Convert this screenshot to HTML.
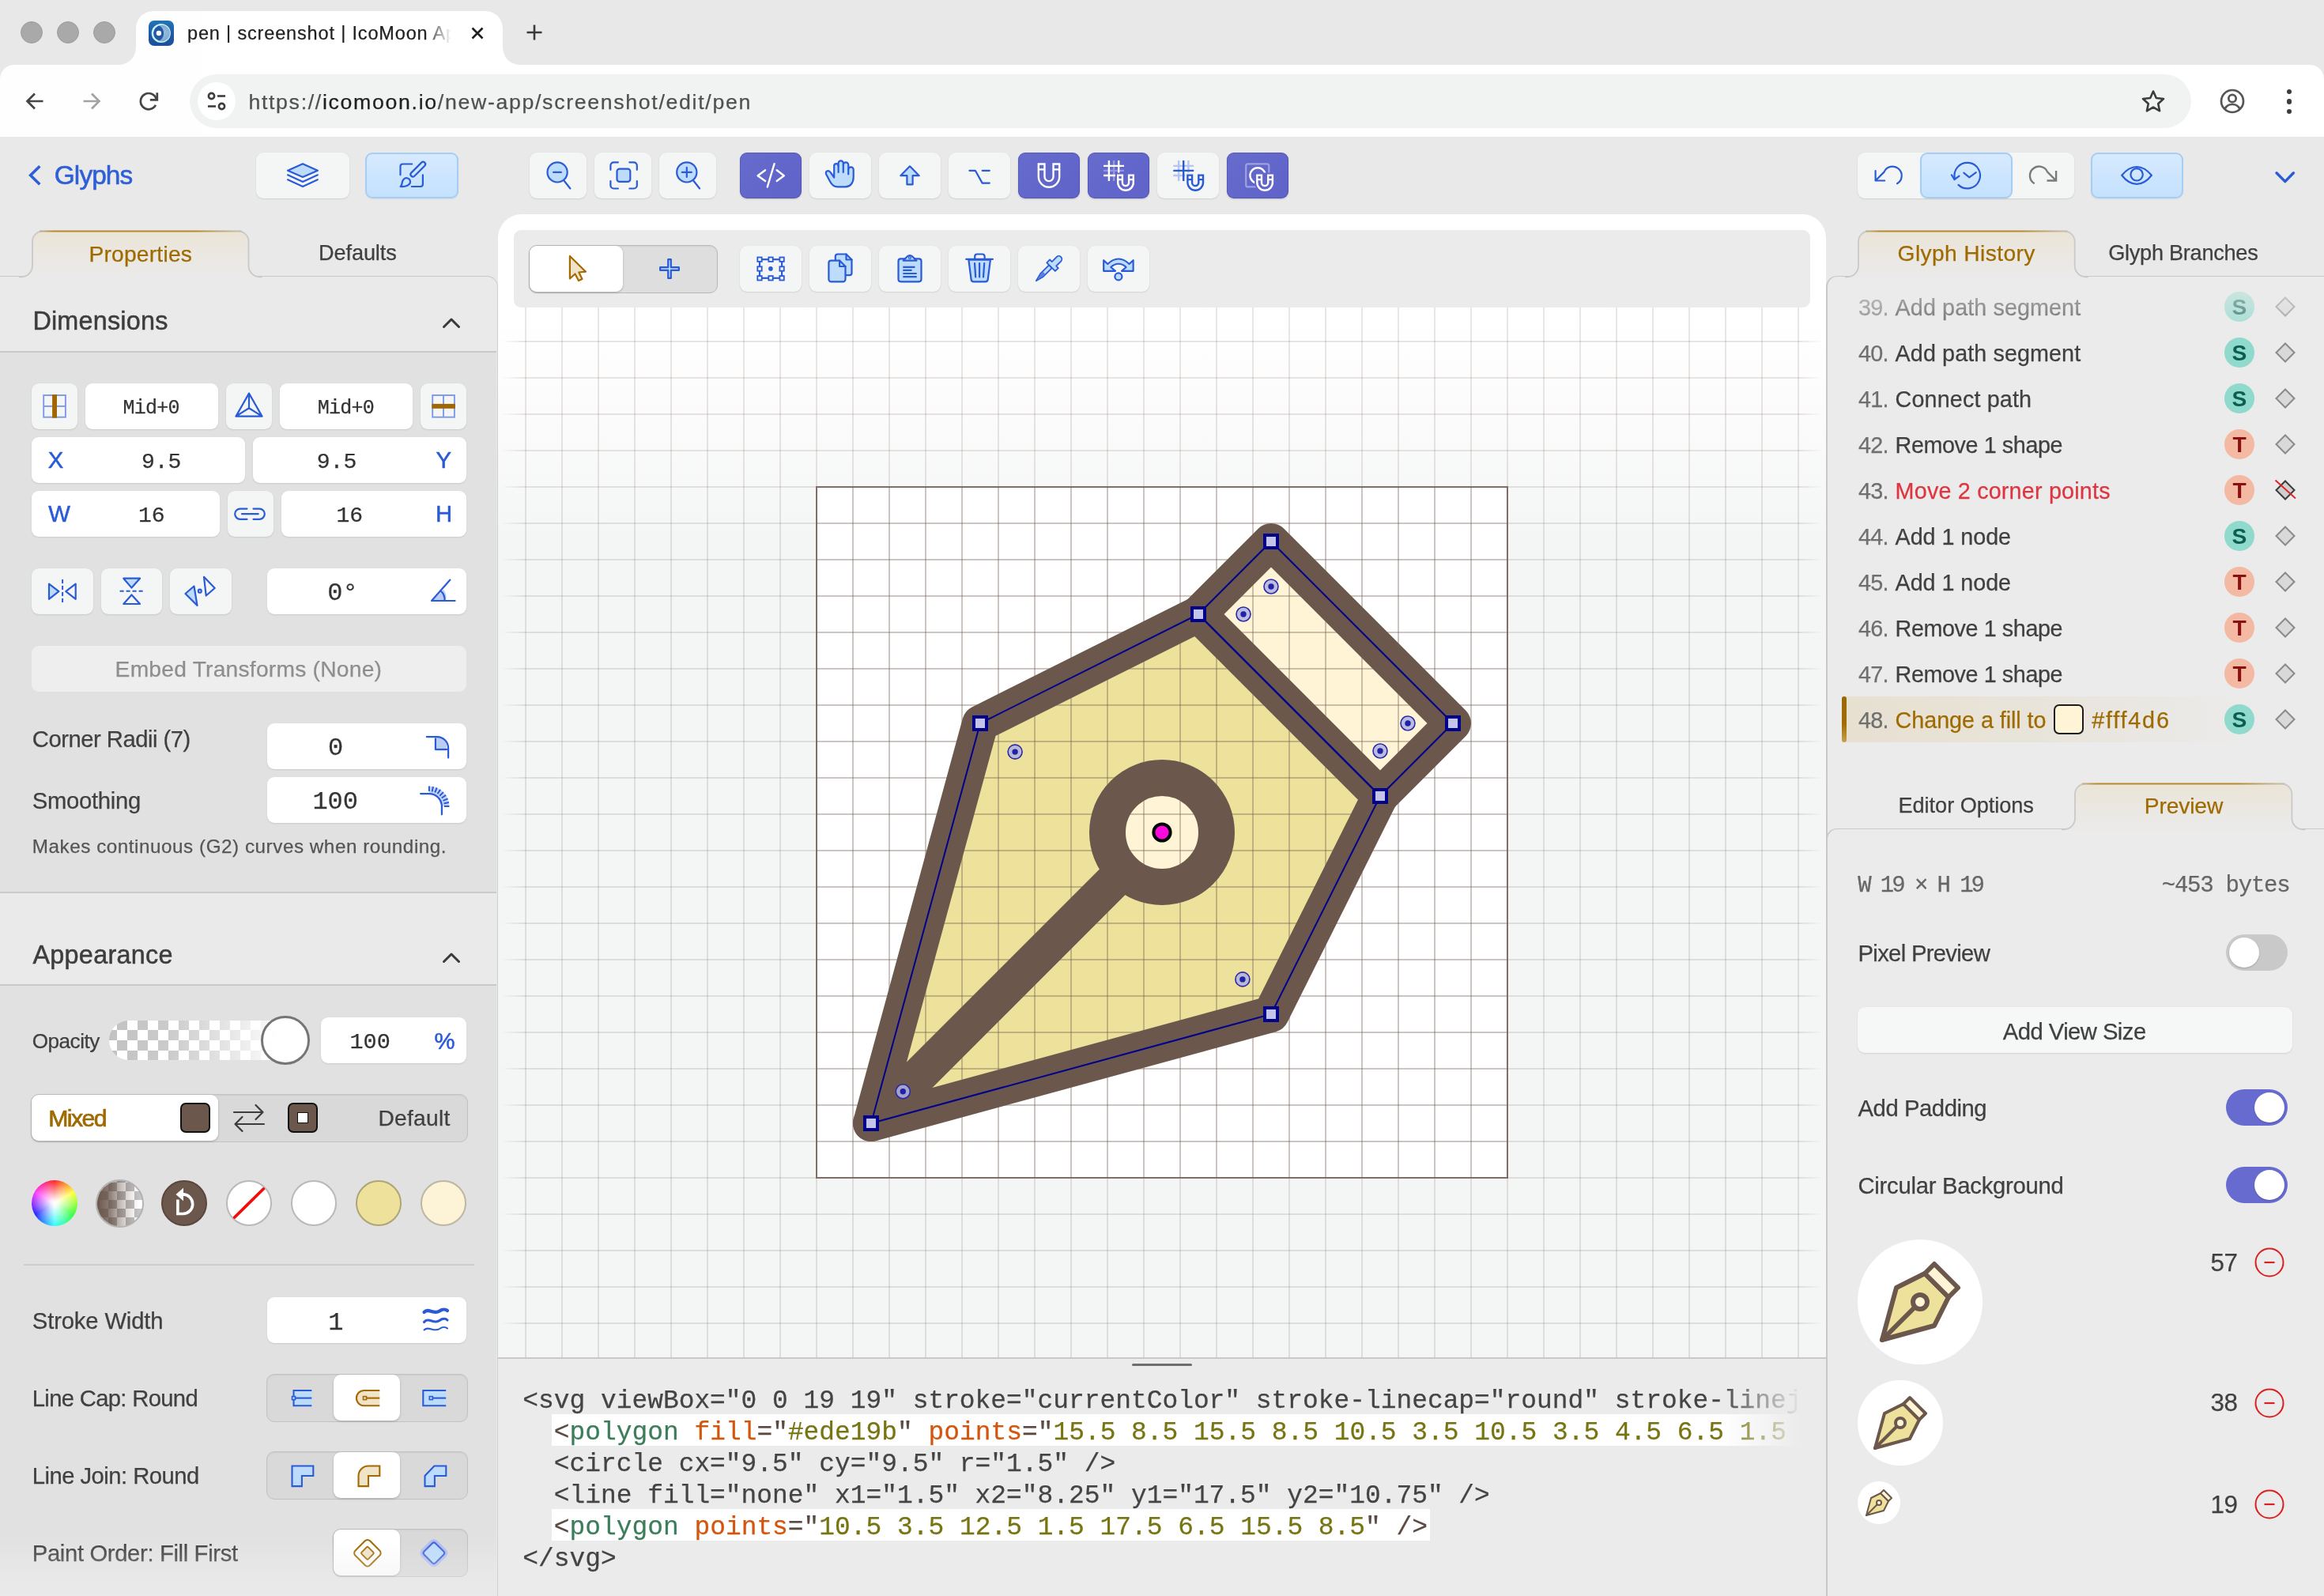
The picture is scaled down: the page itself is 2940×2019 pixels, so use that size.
<!DOCTYPE html>
<html><head><meta charset="utf-8"><title>pen | screenshot | IcoMoon App</title>
<style>
*{box-sizing:border-box;margin:0;padding:0}
html,body{width:2940px;height:2019px;overflow:hidden;background:#e9e9e9;font-family:"Liberation Sans",sans-serif;}
body{position:relative;will-change:transform;opacity:.9999}
div,span.t,svg{position:absolute}
span.t{white-space:pre;display:block;-webkit-text-stroke:0.25px currentColor}
svg{overflow:visible}
.btn{background:#f4f5f5;border-radius:9px;box-shadow:0 1px 2px rgba(0,0,0,.10),0 0 1px rgba(0,0,0,.06)}
.ind{background:linear-gradient(135deg,#666bcd,#5f63c8);border-radius:9px;box-shadow:0 1px 2px rgba(0,0,0,.18), inset 0 0 0 1px rgba(60,60,150,.35)}
.blu{background:linear-gradient(#d6eaff,#c4e1fd);border-radius:9px;border:2px solid #a6cdf3;box-shadow:0 1px 2px rgba(0,0,0,.06)}
.inp{background:#fff;border-radius:9px;box-shadow:0 1px 2px rgba(0,0,0,.10)}
.seg{background:#d9d9d9;border-radius:10px;border:1.5px solid #c2c2c2;box-shadow:inset 0 1px 2px rgba(0,0,0,.06)}
.segw{background:#fff;border-radius:9px;box-shadow:0 1px 3px rgba(0,0,0,.22)}
.ic{fill:none;stroke:#2a5bd7;stroke-width:2.2;stroke-linecap:round;stroke-linejoin:round}
.icf{fill:#bddcfc;stroke:#2a5bd7;stroke-width:2.2;stroke-linecap:round;stroke-linejoin:round}
.icw{fill:none;stroke:#fff;stroke-width:2.4;stroke-linecap:round;stroke-linejoin:round}
.ica{fill:#f1e3c8;stroke:#a26a00;stroke-width:2.2;stroke-linecap:round;stroke-linejoin:round}
</style></head><body>

<div style="left:0px;top:0px;width:2940px;height:173px;background:#e8e8e8"></div>
<div style="left:0px;top:82px;width:2940px;height:91px;background:#fff;border-radius:18px 18px 0 0"></div>
<svg style="left:148px;top:14px;" width="512" height="70" viewBox="0 0 512 70"><path d="M0 68 C14 68 24 60 24 44 L24 24 C24 8 34 0 48 0 L464 0 C478 0 488 8 488 24 L488 44 C488 60 498 68 512 68 L512 70 L0 70 Z" fill="#fff"/></svg>
<div style="left:26px;top:27px;width:28px;height:28px;border-radius:50%;background:#a9a9a9;border:1px solid #9c9c9c"></div>
<div style="left:72px;top:27px;width:28px;height:28px;border-radius:50%;background:#a9a9a9;border:1px solid #9c9c9c"></div>
<div style="left:118px;top:27px;width:28px;height:28px;border-radius:50%;background:#a9a9a9;border:1px solid #9c9c9c"></div>
<svg style="left:188px;top:26px;" width="32" height="32" viewBox="0 0 32 32"><defs><linearGradient id="fv" x1="0" y1="0" x2="0" y2="1"><stop offset="0" stop-color="#2374b5"/><stop offset=".6" stop-color="#1f56a2"/><stop offset="1" stop-color="#1e4f9b"/></linearGradient>
<radialGradient id="fm" cx=".62" cy=".45" r=".6"><stop offset="0" stop-color="#94bedb"/><stop offset="1" stop-color="#7fa6cf"/></radialGradient>
<clipPath id="fc"><circle cx="15.8" cy="16" r="9.7"/></clipPath></defs>
<rect width="32" height="32" rx="7" fill="url(#fv)"/>
<circle cx="15.8" cy="16" r="12.1" fill="#c6f6fb"/>
<circle cx="16.700" cy="16" r="10.400" fill="url(#fm)"/>
<circle cx="8.2" cy="16" r="10.900" fill="#2159a6" clip-path="url(#fc)"/>
<circle cx="12.9" cy="16" r="3.200" fill="#fff"/></svg>
<span class="t" style="left:237.0px;top:30px;font-size:23.5px;line-height:24px;color:#1f1f1f;width:336px;overflow:hidden;-webkit-mask-image:linear-gradient(90deg,#000 300px,transparent 334px);mask-image:linear-gradient(90deg,#000 300px,transparent 334px);letter-spacing:0.84px;">pen | screenshot | IcoMoon App</span>
<svg style="left:596px;top:34px;" width="16" height="16" viewBox="0 0 16 16"><path d="M1.5 1.5 L14.5 14.5 M14.5 1.5 L1.5 14.5" stroke="#1f1f1f" stroke-width="2.6" fill="none"/></svg>
<svg style="left:666px;top:31px;" width="20" height="20" viewBox="0 0 20 20"><path d="M10 0.5 V19.5 M0.5 10 H19.5" stroke="#3a3a3a" stroke-width="2.6" fill="none"/></svg>
<svg style="left:32px;top:116px;" width="24" height="24" viewBox="0 0 24 24"><path d="M22.5 12 H3 M12 2.5 L2.5 12 L12 21.5" stroke="#454545" stroke-width="2.7" fill="none" stroke-linejoin="miter"/></svg>
<svg style="left:104px;top:116px;" width="24" height="24" viewBox="0 0 24 24"><path d="M1.5 12 H21 M12 2.5 L21.5 12 L12 21.5" stroke="#a3a3a3" stroke-width="2.7" fill="none"/></svg>
<svg style="left:176px;top:116px;" width="24" height="24" viewBox="0 0 24 24"><path d="M21.900 10.300 A10.100 10.100 0 1 0 20.900 16.900" stroke="#454545" stroke-width="2.700" fill="none"/><path d="M22.800 1.300 V10.300 H13.800" stroke="#454545" stroke-width="2.700" fill="none"/></svg>
<div style="left:240px;top:94px;width:2532px;height:68px;background:#f1f3f3;border-radius:34px"></div>
<div style="left:250px;top:104px;width:48px;height:48px;background:#fff;border-radius:50%"></div>
<svg style="left:262px;top:116px;" width="24" height="24" viewBox="0 0 24 24"><g stroke="#3c3c3c" stroke-width="2.6" fill="none"><circle cx="5.5" cy="5.5" r="3.6"/><path d="M13 5.5 H23"/><circle cx="18.5" cy="18.5" r="3.6"/><path d="M1 18.5 H11"/></g></svg>
<span class="t" style="left:314.4px;top:116px;font-size:26.7px;line-height:27px;color:#505050;letter-spacing:1.68px;">https://<span style="color:#1f1f1f">icomoon.io</span>/new-app/screenshot/edit/pen</span>
<svg style="left:2709px;top:113px;" width="30" height="30" viewBox="0 0 30 30"><path d="M15 2.5 L18.8 11 L28 12 L21.2 18.2 L23.1 27.3 L15 22.6 L6.9 27.3 L8.8 18.2 L2 12 L11.2 11 Z" stroke="#3c3c3c" stroke-width="2.6" fill="none" stroke-linejoin="round"/></svg>
<svg style="left:2808px;top:112px;" width="32" height="32" viewBox="0 0 32 32"><g stroke="#555" stroke-width="2.7" fill="none"><circle cx="16" cy="16" r="14"/><circle cx="16" cy="12.5" r="4.7"/><path d="M6.5 26 C8.5 21.5 12 20 16 20 C20 20 23.500 21.5 25.5 26"/></g></svg>
<div style="left:2892.5px;top:112.8px;width:6.4px;height:6.4px;border-radius:50%;background:#3c3c3c"></div>
<div style="left:2892.5px;top:125.2px;width:6.4px;height:6.4px;border-radius:50%;background:#3c3c3c"></div>
<div style="left:2892.5px;top:137.8px;width:6.4px;height:6.4px;border-radius:50%;background:#3c3c3c"></div>
<svg style="left:34px;top:207px;" width="20" height="30" viewBox="0 0 20 30"><path d="M16.300 3.300 L4.600 14.800 L16.300 26.300" stroke="#2f5fd6" stroke-width="3.600" fill="none" stroke-linecap="butt" stroke-linejoin="miter"/></svg>
<span class="t" style="left:68.8px;top:205px;font-size:33.44px;line-height:34px;color:#2f5fd6;letter-spacing:-0.92px;-webkit-text-stroke:.6px #2f5fd6;">Glyphs</span>
<div class="btn" style="left:324px;top:193px;width:118px;height:58px;"></div>
<svg style="left:324px;top:193px;" width="118" height="58" viewBox="0 0 118 58"><path class="icf" d="M59 14.2 L77.9 22.8 L59 30.9 L40 22.8 Z"/><path class="ic" d="M40 28.3 L59 36.9 L77.9 28.3 M40 34.3 L59 42.9 L77.9 34.3"/></svg>
<div class="blu" style="left:462px;top:193px;width:118px;height:58px;"></div>
<svg style="left:462px;top:193px;" width="118" height="58" viewBox="0 0 118 58"><g class="ic"><path d="M59.2 14.5 H47.5 A3 3 0 0 0 44.500 17.5 V28.3"/><path d="M72.9 28.3 V40 A3 3 0 0 1 69.9 43 H58.800"/>
<path d="M71.2 12.6 A2.9 2.9 0 0 1 75.300 16.700 L62.300 29.700 A2.9 2.9 0 0 1 58.2 25.600 Z"/>
<path d="M44.6 43 C47.5 41 45.5 37.500 48.500 34.000 C51.500 30.800 56.500 32.200 57.000 36.500 C57.500 41.300 51.000 43.500 44.600 43 Z"/></g></svg>
<div class="btn" style="left:670px;top:193px;width:72px;height:58px;"></div>
<div class="btn" style="left:752px;top:193px;width:72px;height:58px;"></div>
<div class="btn" style="left:834px;top:193px;width:72px;height:58px;"></div>
<svg style="left:670px;top:193px;" width="72" height="58" viewBox="0 0 72 58"><circle class="icf" cx="35.1" cy="24.9" r="12.6"/><path class="ic" d="M43.7 35.7 L51.4 45.5 M30.1 24.9 H39.9"/></svg>
<svg style="left:752px;top:193px;" width="72" height="58" viewBox="0 0 72 58"><rect class="icf" x="28.5" y="20.6" width="16.8" height="16.3" rx="3.2"/><path class="ic" d="M20.4 21.8 V16.300 A4 4 0 0 1 24.400 12.3 H29.9 M44.300 12.3 H49.800 A4 4 0 0 1 53.8 16.3 V21.8 M53.8 36 V41.5 A4 4 0 0 1 49.800 45.5 H44.3 M29.9 45.5 H24.400 A4 4 0 0 1 20.4 41.5 V36"/></svg>
<svg style="left:834px;top:193px;" width="72" height="58" viewBox="0 0 72 58"><circle class="icf" cx="34.8" cy="24.9" r="12.6"/><path class="ic" d="M43.400 35.7 L51.100 45.5 M28.8 24.9 H40.8 M34.8 18.9 V30.9"/></svg>
<div class="ind" style="left:936px;top:193px;width:78px;height:58px;"></div>
<div class="btn" style="left:1024px;top:193px;width:78px;height:58px;"></div>
<div class="btn" style="left:1112px;top:193px;width:78px;height:58px;"></div>
<div class="btn" style="left:1200px;top:193px;width:78px;height:58px;"></div>
<div class="ind" style="left:1288px;top:193px;width:78px;height:58px;"></div>
<div class="ind" style="left:1376px;top:193px;width:78px;height:58px;"></div>
<div class="btn" style="left:1464px;top:193px;width:78px;height:58px;"></div>
<div class="ind" style="left:1552px;top:193px;width:78px;height:58px;"></div>
<svg style="left:936px;top:193px;" width="78" height="58" viewBox="0 0 78 58"><path class="icw" d="M32.1 22.3 L22.6 29.2 L32.1 36 M43.6 14.2 L34.8 43.5 M46.7 22.3 L55.8 29.2 L46.7 36" stroke-linecap="butt"/></svg>
<svg style="left:1024px;top:193px;" width="78" height="58" viewBox="0 0 78 58"><path class="icf" stroke-width="2.300" d="M31.2 30.500 V16.800 A2.700 2.700 0 0 1 36.600 16.800 V13.400 A3.100 3.100 0 0 1 42.800 13.400 V15.500 A3.200 3.200 0 0 1 49.250 15.500 V21.600 A3.200 3.200 0 0 1 55.700 21.600 V31 C55.700 38.500 51.500 43.400 45.500 43.400 H36 C31.500 43.400 28 40.500 26 36.500 L21.200 27.500 C20 25 21.500 23.200 23.500 23.200 C25 23.200 26 24 27 25.500 L31.200 31.500 Z"/><path class="ic" stroke-width="2.300" stroke-linecap="butt" d="M36.600 16.800 V24.900 M42.800 15.500 V24.900 M49.250 21.600 V27.500"/></svg>
<svg style="left:1112px;top:193px;" width="78" height="58" viewBox="0 0 78 58"><path class="icf" d="M39 17.300 L50.700 29.200 H42.600 V40.300 H35.400 V29.200 H27.300 Z"/></svg>
<svg style="left:1200px;top:193px;" width="78" height="58" viewBox="0 0 78 58"><path class="ic" d="M26.4 22.8 H33.8 L42.7 38.6 H51.8 M42.7 22.8 H51.8" stroke-linecap="butt"/></svg>
<svg style="left:1288px;top:193px;" width="78" height="58" viewBox="0 0 78 58"><path d="M25.80 14.50 H33.46 V30.60 A5.54 5.54 0 0 0 44.54 30.60 V14.50 H52.20 V30.60 A13.20 13.20 0 0 1 25.80 30.60 Z" fill="none" stroke="#fff" stroke-width="2.4" stroke-linejoin="miter"/><path d="M25.80 21.40 H33.46 M44.54 21.40 H52.20" stroke="#fff" stroke-width="2.4" fill="none"/></svg>
<svg style="left:1376px;top:193px;" width="78" height="58" viewBox="0 0 78 58"><path d="M26.9 10 V36 M39.2 10 V36 M20.100 16.9 H46 M20.100 29 H46" stroke="#fff" stroke-width="2.4" fill="none"/><path d="M33.1 10 V36 M20.100 22.9 H46" stroke="rgba(255,255,255,.32)" stroke-width="2.4" fill="none"/><path d="M35.00 25.40 H61.00 V37.90 A13.00 13.00 0 0 1 35.00 37.90 Z" fill="#6266ca"/><path d="M38.20 28.60 H43.88 V37.90 A4.12 4.12 0 0 0 52.12 37.90 V28.60 H57.80 V37.90 A9.80 9.80 0 0 1 38.20 37.90 Z" fill="#6266ca" stroke="#fff" stroke-width="2.4" stroke-linejoin="miter"/><path d="M38.20 34.10 H43.88 M52.12 34.10 H57.80" stroke="#fff" stroke-width="2.4" fill="none"/></svg>
<svg style="left:1464px;top:193px;" width="78" height="58" viewBox="0 0 78 58"><path d="M27.100 10 V36 M39.400 10 V36 M20.300 16.9 H46.200 M20.300 29 H46.200" stroke="#b3c6f1" stroke-width="2.4" fill="none"/><path d="M33.200 10 V36 M20.300 22.9 H46.200" stroke="#2a5bd7" stroke-width="2.4" fill="none"/><path d="M35.20 25.40 H61.20 V37.90 A13.00 13.00 0 0 1 35.20 37.90 Z" fill="#f4f5f5"/><path d="M38.40 28.60 H44.08 V37.90 A4.12 4.12 0 0 0 52.32 37.90 V28.60 H58.00 V37.90 A9.80 9.80 0 0 1 38.40 37.90 Z" fill="#f4f5f5" stroke="#2a5bd7" stroke-width="2.4" stroke-linejoin="miter"/><path d="M38.40 34.10 H44.08 M52.32 34.10 H58.00" stroke="#2a5bd7" stroke-width="2.4" fill="none"/></svg>
<svg style="left:1552px;top:193px;" width="78" height="58" viewBox="0 0 78 58"><rect x="24.2" y="14.4" width="29.1" height="29" rx="2.5" fill="none" stroke="rgba(255,255,255,.38)" stroke-width="2.2"/><circle cx="39.1" cy="29" r="9.7" fill="none" stroke="#fff" stroke-width="2.4"/><path d="M35.10 25.40 H61.10 V37.90 A13.00 13.00 0 0 1 35.10 37.90 Z" fill="#6266ca"/><path d="M38.30 28.60 H43.98 V37.90 A4.12 4.12 0 0 0 52.22 37.90 V28.60 H57.90 V37.90 A9.80 9.80 0 0 1 38.30 37.90 Z" fill="#6266ca" stroke="#fff" stroke-width="2.4" stroke-linejoin="miter"/><path d="M38.30 34.10 H43.98 M52.22 34.10 H57.90" stroke="#fff" stroke-width="2.4" fill="none"/></svg>
<div class="btn" style="left:2350px;top:193px;width:274px;height:58px;"></div>
<div class="blu" style="left:2429px;top:193px;width:117px;height:58px;"></div>
<div style="left:0px;top:348.9px;width:630px;height:1671px;background:#eaeaea;border-top:1.8px solid #c9c9c9;border-right:1.8px solid #cfcfcf;border-radius:0 14px 0 0"></div>
<div style="left:0px;top:444px;width:628px;height:686px;background:#e1e1e1;border-top:2px solid #c9c9c9;border-bottom:2px solid #cbcbcb"></div>
<div style="left:0px;top:1245px;width:628px;height:774px;background:linear-gradient(#e1e1e1 0,#e1e1e1 690px,#e8e8e8 774px);border-top:2px solid #c9c9c9"></div>
<svg style="left:25.8px;top:290.5px;" width="303.5" height="62.8" viewBox="0 0 303.5 62.8"><defs><linearGradient id="lg" x1="0" y1="0" x2="0" y2="1"><stop offset="0" stop-color="#ebe4d6"/><stop offset=".5" stop-color="#ebe8e2"/><stop offset="1" stop-color="#eaeaea"/></linearGradient><linearGradient id="lt" gradientUnits="userSpaceOnUse" x1="15.0" y1="0" x2="288.5" y2="0"><stop offset="0" stop-color="#cbcbcb"/><stop offset=".1" stop-color="#b58a2c"/><stop offset=".75" stop-color="#b58a2c"/><stop offset="1" stop-color="#cbcbcb"/></linearGradient></defs><path d="M1.0 59.3 C8.7 59.3 15.0 53.0 15.0 45.3 V14.5 C15.0 7.4 20.9 1.5 28.0 1.5 H275.5 C282.6 1.5 288.5 7.4 288.5 14.5 V45.3 C288.5 53.0 294.8 59.3 302.5 59.3 V61.8 H1.0 Z" fill="url(#lg)"/><path d="M-2.0 59.3 H1.0 C8.7 59.3 15.0 53.0 15.0 45.3 V14.5 C15.0 7.4 20.9 1.5 28.0 1.5 M275.5 1.5 C282.6 1.5 288.5 7.4 288.5 14.5 V45.3 C288.5 53.0 294.8 59.3 302.5 59.3 H305.5" fill="none" stroke="#c9c9c9" stroke-width="1.8"/><path d="M24.0 1.5 H279.5" stroke="url(#lt)" stroke-width="1.8" fill="none"/></svg>
<span class="t" style="left:112.4px;top:307px;font-size:28.21px;line-height:29px;color:#9f6b00;letter-spacing:0.22px;">Properties</span>
<span class="t" style="left:403.1px;top:306px;font-size:27.17px;line-height:28px;color:#404040;letter-spacing:-0.14px;">Defaults</span>
<span class="t" style="left:41.4px;top:390px;font-size:32.39px;line-height:33px;color:#3d3d3d;letter-spacing:0.20px;-webkit-text-stroke:.5px #3d3d3d;">Dimensions</span>
<svg style="left:559.9000000000001px;top:402.1px;" width="22" height="13" viewBox="0 0 22 13"><path d="M1.5 11.500 L11 2 L20.500 11.500" stroke="#3a3a3a" stroke-width="3" fill="none" stroke-linecap="round" stroke-linejoin="round"/></svg>
<div class="btn" style="left:40px;top:485px;width:58px;height:58px;"></div>
<svg style="left:40px;top:485px;" width="58" height="58" viewBox="0 0 58 58"><rect x="15.2" y="15" width="27.7" height="27.7" fill="none" stroke="#7e99e8" stroke-width="1.9"/><path d="M15.2 28.9 H42.9" stroke="#7e99e8" stroke-width="1.9"/><rect x="26.1" y="14.100" width="5.9" height="29.6" fill="#a06700"/></svg>
<div class="inp" style="left:108px;top:485px;width:168px;height:58px;"></div>
<span class="t" style="left:155.5px;top:504px;font-size:25px;line-height:25px;color:#333;font-family:'Liberation Mono', monospace;letter-spacing:-0.75px;">Mid+0</span>
<div class="btn" style="left:286px;top:485px;width:58px;height:58px;"></div>
<svg style="left:286px;top:485px;" width="58" height="58" viewBox="0 0 58 58"><path class="ic" d="M29 12.6 L12.5 41.6 H45.5 Z M29 12.6 V31.3 L12.5 41.6 M29 31.3 L45.5 41.6" stroke-width="2"/></svg>
<div class="inp" style="left:354px;top:485px;width:168px;height:58px;"></div>
<span class="t" style="left:401.8px;top:504px;font-size:25px;line-height:25px;color:#333;font-family:'Liberation Mono', monospace;letter-spacing:-0.75px;">Mid+0</span>
<div class="btn" style="left:532px;top:485px;width:58px;height:58px;"></div>
<svg style="left:532px;top:485px;" width="58" height="58" viewBox="0 0 58 58"><rect x="15.2" y="15" width="27.7" height="27.7" fill="none" stroke="#7e99e8" stroke-width="1.9"/><path d="M29 15 V42.7" stroke="#7e99e8" stroke-width="1.9"/><rect x="14.3" y="25.900" width="29.6" height="5.9" fill="#a06700"/></svg>
<div class="inp" style="left:40px;top:553px;width:270px;height:58px;"></div>
<span class="t" style="left:60.7px;top:567px;font-size:29.26px;line-height:30px;color:#2a5bd7;-webkit-text-stroke:.55px #2a5bd7;">X</span>
<span class="t" style="left:179.0px;top:571px;font-size:28px;line-height:28px;color:#333;font-family:'Liberation Mono', monospace;">9.5</span>
<div class="inp" style="left:320px;top:553px;width:270px;height:58px;"></div>
<span class="t" style="left:400.8px;top:571px;font-size:28px;line-height:28px;color:#333;font-family:'Liberation Mono', monospace;">9.5</span>
<span class="t" style="left:551.4px;top:567px;font-size:29.26px;line-height:30px;color:#2a5bd7;-webkit-text-stroke:.55px #2a5bd7;">Y</span>
<div class="inp" style="left:40px;top:621px;width:238px;height:58px;"></div>
<span class="t" style="left:61.2px;top:635px;font-size:29.26px;line-height:30px;color:#2a5bd7;-webkit-text-stroke:.55px #2a5bd7;">W</span>
<span class="t" style="left:175.0px;top:639px;font-size:28px;line-height:28px;color:#333;font-family:'Liberation Mono', monospace;">16</span>
<div class="btn" style="left:288px;top:621px;width:58px;height:58px;"></div>
<svg style="left:288px;top:621px;" width="58" height="58" viewBox="0 0 58 58"><g class="ic" stroke-width="2.3"><path d="M24.5 22.600 H15.800 A6.6 6.6 0 0 0 15.800 35.800 H24.5"/><path d="M32.5 22.600 H40.200 A6.6 6.6 0 0 1 40.200 35.800 H32.5"/><path d="M18 29.2 H38.7"/></g></svg>
<div class="inp" style="left:356px;top:621px;width:234px;height:58px;"></div>
<span class="t" style="left:425.4px;top:639px;font-size:28px;line-height:28px;color:#333;font-family:'Liberation Mono', monospace;">16</span>
<span class="t" style="left:550.9px;top:635px;font-size:29.26px;line-height:30px;color:#2a5bd7;-webkit-text-stroke:.55px #2a5bd7;">H</span>
<div class="btn" style="left:40px;top:719px;width:77.5px;height:58px;"></div>
<div class="btn" style="left:127.5px;top:719px;width:77.5px;height:58px;"></div>
<div class="btn" style="left:215px;top:719px;width:77.5px;height:58px;"></div>
<svg style="left:40px;top:719px;" width="78" height="58" viewBox="0 0 78 58"><path class="icf" d="M22 19.600 V38.900 L34.4 29.2 Z" stroke-width="2"/><path class="ic" d="M55.700 19.600 V38.900 L43.3 29.2 Z" stroke-width="2"/><path d="M39.1 14 V44" stroke="#2a5bd7" stroke-width="2" stroke-dasharray="5 3" fill="none"/></svg>
<svg style="left:127.5px;top:719px;" width="78" height="58" viewBox="0 0 78 58"><path class="icf" d="M28.300 12.7 H49.000 L38.5 24.6 Z" stroke-width="2"/><path class="ic" d="M28.300 45 H49.000 L38.5 33.400 Z" stroke-width="2"/><path d="M23.600 28.7 H53.100" stroke="#2a5bd7" stroke-width="2" stroke-dasharray="5 3" fill="none"/></svg>
<svg style="left:215px;top:719px;" width="78" height="58" viewBox="0 0 78 58"><path class="icf" d="M19.5 32 L34.5 47 L30.500 22.500 Z" stroke-width="2"/><path class="ic" d="M43 10.800 L56.700 25 L45.700 34.500 Z" stroke-width="2"/><circle cx="37.8" cy="28.700" r="2" class="ic" stroke-width="1.8"/></svg>
<div class="inp" style="left:338px;top:719px;width:252px;height:58px;"></div>
<span class="t" style="left:414.3px;top:735px;font-size:32px;line-height:32px;color:#333;font-family:'Liberation Mono', monospace;">0°</span>
<svg style="left:338px;top:719px;" width="252" height="58" viewBox="0 0 252 58"><path d="M208.500 41 L223 27 A15.5 15.5 0 0 1 226 41 Z" fill="#bccdf5"/><path class="ic" d="M231.4 14.600 L208 41 H237.600" stroke-width="2.2"/><path class="ic" d="M219.500 28.500 A15 15 0 0 1 224.500 41" stroke-width="2"/></svg>
<div style="left:40px;top:817px;width:550px;height:58px;background:#eeeeee;border-radius:9px"></div>
<span class="t" style="left:145.6px;top:832px;font-size:28.21px;line-height:29px;color:#8e8e8e;letter-spacing:0.23px;">Embed Transforms (None)</span>
<span class="t" style="left:40.8px;top:920px;font-size:29.26px;line-height:30px;color:#404040;letter-spacing:-0.50px;">Corner Radii (7)</span>
<div class="inp" style="left:338px;top:915px;width:252px;height:58px;"></div>
<span class="t" style="left:415.0px;top:931px;font-size:32px;line-height:32px;color:#333;font-family:'Liberation Mono', monospace;">0</span>
<svg style="left:338px;top:915px;" width="252" height="58" viewBox="0 0 252 58"><path d="M212.900 19.400 V33.100 H227.200 V29 A12 12 0 0 0 215 17.1 Z" fill="#bccdf5"/><path class="ic" d="M201.800 17.100 H215 A14.2 14.2 0 0 1 229.100 31.300 V43.600" stroke-width="2.2" stroke-linecap="butt"/><path class="ic" d="M212.900 19.400 V33.100 H227.200" stroke-width="2.2" stroke-linecap="butt"/></svg>
<span class="t" style="left:40.8px;top:998px;font-size:29.26px;line-height:30px;color:#404040;letter-spacing:-0.30px;">Smoothing</span>
<div class="inp" style="left:338px;top:983px;width:252px;height:58px;"></div>
<span class="t" style="left:395.4px;top:999px;font-size:32px;line-height:32px;color:#333;font-family:'Liberation Mono', monospace;">100</span>
<svg style="left:338px;top:983px;" width="252" height="58" viewBox="0 0 252 58"><path d="M204.9 11.600 A25.5 25.5 0 0 1 230.400 37.1 L220.900 37.1 A16 16 0 0 0 204.9 21.100 Z" fill="#c5d4f7"/><path d="M204.9 18.1 L204.9 11.6 M208.6 18.5 L209.9 12.1 M212.2 19.5 L214.7 13.5 M215.5 21.3 L219.1 15.9 M218.3 23.7 L222.9 19.1 M220.7 26.5 L226.1 22.9 M222.5 29.8 L228.5 27.3 M223.5 33.4 L229.9 32.1 M223.9 37.1 L230.4 37.1 " stroke="#2a5bd7" stroke-width="2" fill="none"/><path class="ic" d="M194.100 21.100 H204.900 A16 16 0 0 1 220.900 37.100 V47.300" stroke-width="2.3" stroke-linecap="butt"/></svg>
<span class="t" style="left:40.8px;top:1058px;font-size:24.24px;line-height:25px;color:#555;letter-spacing:0.54px;">Makes continuous (G2) curves when rounding.</span>
<span class="t" style="left:41.4px;top:1192px;font-size:32.39px;line-height:33px;color:#3d3d3d;letter-spacing:0.29px;-webkit-text-stroke:.5px #3d3d3d;">Appearance</span>
<svg style="left:559.9000000000001px;top:1204.6px;" width="22" height="13" viewBox="0 0 22 13"><path d="M1.5 11.500 L11 2 L20.500 11.500" stroke="#3a3a3a" stroke-width="3" fill="none" stroke-linecap="round" stroke-linejoin="round"/></svg>
<span class="t" style="left:40.8px;top:1304px;font-size:26.12px;line-height:27px;color:#404040;letter-spacing:-0.51px;">Opacity</span>
<div style="left:138px;top:1291px;width:253.5px;height:50px;border-radius:25px;overflow:hidden;background-color:#fff;background-image:linear-gradient(45deg,#c2c2c2 25%,transparent 25%,transparent 75%,#c2c2c2 75%),linear-gradient(45deg,#c2c2c2 25%,transparent 25%,transparent 75%,#c2c2c2 75%);background-size:26px 26px;background-position:-3px -1px,10px 12px;"><div style="left:0;top:0;width:100%;height:100%;background:linear-gradient(90deg,rgba(255,255,255,0) 0,rgba(255,255,255,.15) 30%,rgba(255,255,255,.75) 70%,#fff 88%)"></div></div>
<div style="left:330px;top:1285.3px;width:61.5px;height:61.5px;border-radius:50%;border:3.5px solid #757575;background:rgba(255,255,255,.82)"></div>
<div class="inp" style="left:406px;top:1287px;width:184px;height:58px;"></div>
<span class="t" style="left:442.5px;top:1304px;font-size:28.5px;line-height:29px;color:#333;font-family:'Liberation Mono', monospace;">100</span>
<span class="t" style="left:549.5px;top:1302px;font-size:29.26px;line-height:30px;color:#2a5bd7;-webkit-text-stroke:.55px #2a5bd7;">%</span>
<div class="seg" style="left:38.5px;top:1383.5px;width:553px;height:61px;"></div>
<div class="segw" style="left:40px;top:1385px;width:236px;height:58px;"></div>
<span class="t" style="left:61.2px;top:1399px;font-size:30.3px;line-height:31px;color:#9f6b00;letter-spacing:-1.61px;-webkit-text-stroke:.7px #9f6b00;">Mixed</span>
<div style="left:228.3px;top:1395.3px;width:37.7px;height:37.7px;background:#6c574d;border:2.3px solid #111;border-radius:7px"></div>
<svg style="left:294px;top:1394px;" width="42" height="40" viewBox="0 0 42 40"><path d="M2 13 H38.500 M29.500 4 L38.500 13 L29.500 22 M40 28 H3.500 M12.500 19 L3.500 28 L12.500 37" stroke="#3c3c3c" stroke-width="2.2" fill="none" stroke-linecap="round" stroke-linejoin="round"/></svg>
<div style="left:364px;top:1395.3px;width:37.7px;height:37.7px;background:#6c574d;border:2.3px solid #111;border-radius:7px"><div style="left:9.500px;top:9.500px;width:14.200px;height:14.200px;background:#fff;border:1.5px solid #111"></div></div>
<span class="t" style="left:478.4px;top:1400px;font-size:28.21px;line-height:29px;color:#404040;letter-spacing:0.25px;">Default</span>
<div style="left:40px;top:1493px;width:58px;height:58px;border-radius:50%;background:radial-gradient(circle at 50% 50%,#fff 0,rgba(255,255,255,.92) 10%,rgba(255,255,255,0) 68%),conic-gradient(from 0deg,#ff2a2a,#ffff3a 16.6%,#3aff3a 33.3%,#3affff 50%,#2a2aff 66.6%,#ff3aff 83.3%,#ff2a2a)"></div>
<div style="left:120.5px;top:1491.5px;width:61px;height:61px;border-radius:50%;overflow:hidden;border:2px solid #b3b3b3;background-color:#fff;background-image:linear-gradient(45deg,#9c9c9c 25%,transparent 25%,transparent 75%,#9c9c9c 75%),linear-gradient(45deg,#9c9c9c 25%,transparent 25%,transparent 75%,#9c9c9c 75%);background-size:22px 22px;background-position:3px 2px,14px 13px;"><div style="left:0;top:0;width:100%;height:100%;background:linear-gradient(90deg,#6c574d 0,rgba(108,87,77,.8) 25%,rgba(108,87,77,.35) 60%,rgba(108,87,77,0) 95%)"></div><div style="left:0;top:0;width:100%;height:100%;background:linear-gradient(90deg,rgba(255,255,255,0) 30%,rgba(255,255,255,.45) 100%)"></div></div>
<div style="left:204px;top:1493px;width:58px;height:58px;border-radius:50%;background:#6c574d;border:2px solid #5a463d"></div>
<svg style="left:204px;top:1493px;" width="58" height="58" viewBox="0 0 58 58"><path d="M20.900 24.500 V42.500 H27.400 A12.300 12.300 0 0 0 27.400 17.900 H26" stroke="#fff" stroke-width="3.600" fill="none" stroke-linejoin="miter"/><path d="M18.500 18 L28 9.700 V26.200 Z" fill="#fff"/></svg>
<div style="left:286px;top:1493px;width:58px;height:58px;border-radius:50%;background:#fff;border:2px solid #b9b9b9"></div>
<svg style="left:286px;top:1493px;" width="58" height="58" viewBox="0 0 58 58"><path d="M10.700 47 L47.300 11" stroke="#f20d0d" stroke-width="3.800" stroke-linecap="round"/></svg>
<div style="left:368px;top:1493px;width:58px;height:58px;border-radius:50%;background:#fff;border:2px solid #b9b9b9"></div>
<div style="left:450px;top:1493px;width:58px;height:58px;border-radius:50%;background:#ede19b;border:2px solid #aea577"></div>
<div style="left:532px;top:1493px;width:58px;height:58px;border-radius:50%;background:#fdf3d6;border:2px solid #bdb6a3"></div>
<div style="left:30px;top:1599px;width:570px;height:2px;background:#cdcdcd"></div>
<span class="t" style="left:40.8px;top:1656px;font-size:29.26px;line-height:30px;color:#404040;letter-spacing:-0.15px;">Stroke Width</span>
<div class="inp" style="left:338px;top:1641px;width:252px;height:58px;"></div>
<span class="t" style="left:415.2px;top:1658px;font-size:32px;line-height:32px;color:#333;font-family:'Liberation Mono', monospace;">1</span>
<svg style="left:338px;top:1641px;" width="252" height="58" viewBox="0 0 252 58"><g fill="none" stroke="#2a5bd7" stroke-linecap="round"><path d="M198.500 19 C204 13 211 22.5 218 17.500 C222 14.500 226 15.500 228 17" stroke-width="4.2"/><path d="M198.500 31.500 C204 24.500 211 35 218 29.500 C222 26.500 226 27 228 29" stroke-width="3.1"/><path d="M198.500 41.500 C204 35.500 211 45 218 40 C222 37 226 37.500 228 39.500" stroke-width="2"/></g></svg>
<span class="t" style="left:40.8px;top:1754px;font-size:29.26px;line-height:30px;color:#404040;letter-spacing:-0.69px;">Line Cap: Round</span>
<div class="seg" style="left:336.5px;top:1737.5px;width:255px;height:61px;"></div>
<div class="segw" style="left:422px;top:1739px;width:84px;height:58px;"></div>
<svg style="left:336.5px;top:1737.5px;" width="255" height="61" viewBox="0 0 255 61"><g stroke-width="2.1" stroke-linejoin="miter">
<path d="M57.300 21 H34.500 V40.200 H57.300" fill="#bddcfc" stroke="#2a5bd7"/><path d="M34.500 30.600 H57.300" stroke="#2a5bd7" fill="none"/><rect x="32.5" y="28.600" width="4" height="4" fill="#bddcfc" stroke="#2a5bd7" stroke-width="1.6"/>
<path d="M143.300 21 H123.500 A9.6 9.6 0 0 0 123.500 40.200 H143.300" fill="#f1e3c8" stroke="#a26a00"/><path d="M125 30.600 H143.300" stroke="#a26a00" fill="none"/><rect x="122.5" y="28.600" width="4" height="4" fill="#f1e3c8" stroke="#a26a00" stroke-width="1.6"/>
<path d="M227.200 21 H198.300 V40.200 H227.200" fill="#bddcfc" stroke="#2a5bd7"/><path d="M208.300 30.600 H227.200" stroke="#2a5bd7" fill="none"/><rect x="206.3" y="28.600" width="4" height="4" fill="#bddcfc" stroke="#2a5bd7" stroke-width="1.6"/>
</g></svg>
<span class="t" style="left:40.8px;top:1852px;font-size:29.26px;line-height:30px;color:#404040;letter-spacing:-0.54px;">Line Join: Round</span>
<div class="seg" style="left:336.5px;top:1835.5px;width:255px;height:61px;"></div>
<div class="segw" style="left:422px;top:1837px;width:84px;height:58px;"></div>
<svg style="left:336.5px;top:1835.5px;" width="255" height="61" viewBox="0 0 255 61"><g stroke-width="2.1" stroke-linejoin="miter">
<path d="M32.500 18.500 H59.300 V31 H44.900 V44.100 H32.500 Z" fill="#bddcfc" stroke="#2a5bd7"/>
<path d="M116.500 44.100 V31 A12.5 12.5 0 0 1 129 18.500 H143.300 V31 H129 V44.100 Z" fill="#f1e3c8" stroke="#a26a00"/>
<path d="M200.500 44.100 V31 L212.400 18.500 H227.300 V31 H212.900 V44.100 Z" fill="#bddcfc" stroke="#2a5bd7"/>
</g></svg>
<span class="t" style="left:40.8px;top:1950px;font-size:29.26px;line-height:30px;color:#404040;letter-spacing:-0.36px;">Paint Order: Fill First</span>
<div class="seg" style="left:421px;top:1933.5px;width:170.5px;height:61px;"></div>
<div class="segw" style="left:422px;top:1935px;width:84px;height:58px;"></div>
<svg style="left:421px;top:1933.5px;" width="170.5" height="61" viewBox="0 0 170.5 61"><g transform="translate(43.9 30.7) rotate(45)"><rect x="-13.1" y="-13.1" width="26.2" height="26.2" rx="4.5" fill="none" stroke="#a26a00" stroke-width="2.100"/><rect x="-6" y="-6" width="12" height="12" rx="1.6" fill="#f1e3c8" stroke="#a26a00" stroke-width="1.900"/></g>
<g transform="translate(127.9 30.7) rotate(45)"><rect x="-12.200" y="-12.200" width="24.400" height="24.400" rx="4.5" fill="none" stroke="#b4bcef" stroke-width="4.200"/><rect x="-10.200" y="-10.200" width="20.400" height="20.400" rx="3" fill="#bddcfc" stroke="#3b64d8" stroke-width="2.100"/></g></svg>
<div style="left:0px;top:1950px;width:628px;height:69px;background:linear-gradient(rgba(233,233,233,0),rgba(235,235,235,.6))"></div>
<div style="left:630px;top:271px;width:1680px;height:1748px;background:#fff;border-radius:30px 30px 0 0;overflow:hidden"><div style="left:0;top:118px;width:1680px;height:1330px;background:linear-gradient(#fff 0,#fdfdfd 90px,#f4f5f5 300px,#f4f5f5 100%)"></div><div style="left:0;top:118px;width:1680px;height:1330px;background-image:linear-gradient(90deg,rgba(108,87,77,.15) 2px,transparent 2px),linear-gradient(rgba(108,87,77,.15) 2px,transparent 2px);background-size:46px 46px;background-position:34px 42px;-webkit-mask-image:linear-gradient(90deg,transparent 4px,#000 34px,#000 1646px,transparent 1676px);mask-image:linear-gradient(90deg,transparent 4px,#000 34px,#000 1646px,transparent 1676px)"></div></div>
<div style="left:650px;top:291px;width:1640px;height:98px;background:#ebebeb;border-radius:9px"></div>
<div class="seg" style="left:668.5px;top:309.5px;width:239px;height:61px;background:#dedede;border-color:#b9b9b9"></div>
<div class="segw" style="left:670px;top:311px;width:118px;height:58px;"></div>
<svg style="left:670px;top:311px;" width="118" height="58" viewBox="0 0 118 58"><path class="ica" d="M50.900 13 V41.500 L57.500 35.500 L62 44 L66.500 42 L62.300 33.500 L71 32.700 Z" stroke-linejoin="miter"/></svg>
<svg style="left:788px;top:311px;" width="118" height="58" viewBox="0 0 118 58"><path class="icf" d="M57.200 17.100 H60.800 V27.200 H70.900 V30.800 H60.800 V40.900 H57.200 V30.800 H47.100 V27.200 H57.200 Z" stroke-width="2" stroke-linejoin="miter"/></svg>
<div class="btn" style="left:936px;top:311px;width:78px;height:58px;"></div>
<div class="btn" style="left:1024px;top:311px;width:78px;height:58px;"></div>
<div class="btn" style="left:1112px;top:311px;width:78px;height:58px;"></div>
<div class="btn" style="left:1200px;top:311px;width:78px;height:58px;"></div>
<div class="btn" style="left:1288px;top:311px;width:78px;height:58px;"></div>
<div class="btn" style="left:1376px;top:311px;width:78px;height:58px;"></div>
<svg style="left:936px;top:311px;" width="78" height="58" viewBox="0 0 78 58"><rect x="25" y="17.2" width="28.100" height="23.600" fill="none" stroke="#2a5bd7" stroke-width="2.2"/><rect x="22.30" y="14.50" width="5.4" height="5.4" fill="#f4f5f5" stroke="#2a5bd7" stroke-width="1.8"/><rect x="22.30" y="26.30" width="5.4" height="5.4" fill="#f4f5f5" stroke="#2a5bd7" stroke-width="1.8"/><rect x="22.30" y="38.10" width="5.4" height="5.4" fill="#f4f5f5" stroke="#2a5bd7" stroke-width="1.8"/><rect x="36.35" y="14.50" width="5.4" height="5.4" fill="#f4f5f5" stroke="#2a5bd7" stroke-width="1.8"/><rect x="36.35" y="38.10" width="5.4" height="5.4" fill="#f4f5f5" stroke="#2a5bd7" stroke-width="1.8"/><rect x="50.40" y="14.50" width="5.4" height="5.4" fill="#f4f5f5" stroke="#2a5bd7" stroke-width="1.8"/><rect x="50.40" y="26.30" width="5.4" height="5.4" fill="#f4f5f5" stroke="#2a5bd7" stroke-width="1.8"/><rect x="50.40" y="38.10" width="5.4" height="5.4" fill="#f4f5f5" stroke="#2a5bd7" stroke-width="1.8"/><circle cx="38.900" cy="28.900" r="2.8" fill="#2a5bd7"/></svg>
<svg style="left:1024px;top:311px;" width="78" height="58" viewBox="0 0 78 58"><g class="icf" stroke-width="2.2"><path d="M35.800 10.500 H46.500 L53.500 17.500 V34.500 A2.700 2.700 0 0 1 50.800 37.200 H35.800 A3 3 0 0 1 32.800 34.200 V13.500 A3 3 0 0 1 35.800 10.500 Z"/><path d="M46.500 10.500 V17.500 H53.500" fill="none"/>
<path d="M27.400 18.600 H38.100 L45.500 26 V42.300 A3 3 0 0 1 42.500 45.300 H27.400 A3 3 0 0 1 24.400 42.300 V21.600 A3 3 0 0 1 27.400 18.600 Z"/><path d="M38.100 18.600 V26 H45.500" fill="none"/></g></svg>
<svg style="left:1112px;top:311px;" width="78" height="58" viewBox="0 0 78 58"><g class="icf" stroke-width="2.2"><rect x="24.500" y="16.300" width="29" height="29" rx="3"/><path d="M30.700 18.600 L36 13.200 A4.300 4.300 0 0 1 42 13.200 L47.400 18.600 Z"/></g><circle cx="39" cy="15" r="1.400" fill="#f4f5f5" stroke="#2a5bd7" stroke-width="1.300"/>
<path d="M30.300 26.900 H45.500 M30.300 30.900 H41.600 M30.300 35 H47.700 M30.300 39.100 H47.700" stroke="#2a5bd7" stroke-width="2.100" fill="none"/></svg>
<svg style="left:1200px;top:311px;" width="78" height="58" viewBox="0 0 78 58"><g class="icf" stroke-width="2.2"><path d="M25.400 17.600 H52.900 L49.700 42.500 A3.200 3.200 0 0 1 46.500 45.300 H31.800 A3.200 3.200 0 0 1 28.600 42.500 Z"/><path d="M33.200 16.900 V13.500 A3 3 0 0 1 36.200 10.500 H42.600 A3 3 0 0 1 45.600 13.500 V16.900" fill="none"/><path d="M22.300 16.900 H55.900 M33 22.100 L34.200 39.500 M39.100 22.100 V39.500 M45.200 22.100 L44 39.500" fill="none"/></g></svg>
<svg style="left:1288px;top:311px;" width="78" height="58" viewBox="0 0 78 58"><g transform="translate(39.3 28.5) scale(.81) translate(-42 -26.9)"><g transform="rotate(45 39 29)"><g class="icf" stroke-width="2.100"><path d="M35.800 22 V41 L39 53.500 L42.200 41 V22 Z"/><path d="M35.200 4.600 A4.800 4.800 0 0 1 44.800 4.600 V15 H49.300 V21.800 H30.700 V15 H35.200 Z"/></g><path d="M36.500 36 V41 L39 51 L41.500 41 V36 Z" fill="#5b7fe0"/></g></g></svg>
<svg style="left:1376px;top:311px;" width="78" height="58" viewBox="0 0 78 58"><path class="icf" stroke-width="2.100" stroke-linejoin="miter" d="M20.200 18.200 V31.800 H35 L29.300 27 C35 21.300 43 21.300 48.600 27 L43 31.800 H57.600 V18.200 L52.500 23 C44 14.300 34 14.300 25.300 23 Z"/><circle class="icf" stroke-width="2.100" cx="38.900" cy="38.900" r="4.500"/></svg>
<div style="left:1032px;top:615px;width:876px;height:876px;background:#fff;border:2px solid #85746c"></div>
<svg style="left:1033px;top:616px" width="874" height="874" viewBox="0 0 19 19" stroke="#6c574d" stroke-linecap="round" stroke-linejoin="round" stroke-width="1">
<polygon fill="#ede19b" points="15.5 8.5 15.5 8.5 10.5 3.5 10.5 3.5 4.5 6.5 1.5 17.5 12.5 14.5"/>
<circle cx="9.5" cy="9.5" r="1.5" fill="#fff4d6"/>
<line fill="none" x1="1.500" x2="8.25" y1="17.5" y2="10.75"/>
<polygon fill="#fff4d6" points="10.5 3.5 12.5 1.5 17.5 6.5 15.5 8.5"/></svg>
<div style="left:1033px;top:616px;width:874px;height:874px;background-image:linear-gradient(90deg,rgba(108,87,77,.35) 2px,transparent 2px),linear-gradient(rgba(108,87,77,.35) 2px,transparent 2px);background-size:46px 46px;background-position:-1px -1px"></div>
<svg style="left:0px;top:0px;" width="2940" height="2019" viewBox="0 0 2940 2019"><polygon points="1746.0,1007.0 1516.0,777.0 1240.0,915.0 1102.0,1421.0 1608.0,1283.0" fill="none" stroke="#00008b" stroke-width="2"/><polygon points="1516.0,777.0 1608.0,685.0 1838.0,915.0 1746.0,1007.0" fill="none" stroke="#00008b" stroke-width="2"/><circle cx="1573.0" cy="777.0" r="9" fill="rgba(176,176,226,.85)" stroke="#2a2aa8" stroke-width="1.600"/><circle cx="1573.0" cy="777.0" r="3.700" fill="#2222a8"/><circle cx="1608.0" cy="742.0" r="9" fill="rgba(176,176,226,.85)" stroke="#2a2aa8" stroke-width="1.600"/><circle cx="1608.0" cy="742.0" r="3.700" fill="#2222a8"/><circle cx="1781.0" cy="915.0" r="9" fill="rgba(176,176,226,.85)" stroke="#2a2aa8" stroke-width="1.600"/><circle cx="1781.0" cy="915.0" r="3.700" fill="#2222a8"/><circle cx="1746.0" cy="950.0" r="9" fill="rgba(176,176,226,.85)" stroke="#2a2aa8" stroke-width="1.600"/><circle cx="1746.0" cy="950.0" r="3.700" fill="#2222a8"/><circle cx="1284.1" cy="951.1" r="9" fill="rgba(176,176,226,.85)" stroke="#2a2aa8" stroke-width="1.600"/><circle cx="1284.1" cy="951.1" r="3.700" fill="#2222a8"/><circle cx="1142.3" cy="1380.7" r="9" fill="rgba(176,176,226,.85)" stroke="#2a2aa8" stroke-width="1.600"/><circle cx="1142.3" cy="1380.7" r="3.700" fill="#2222a8"/><circle cx="1571.9" cy="1238.9" r="9" fill="rgba(176,176,226,.85)" stroke="#2a2aa8" stroke-width="1.600"/><circle cx="1571.9" cy="1238.9" r="3.700" fill="#2222a8"/><rect x="1600.0" y="677.0" width="16" height="16" fill="#c4c4ea" stroke="#00008b" stroke-width="4"/><rect x="1508.0" y="769.0" width="16" height="16" fill="#c4c4ea" stroke="#00008b" stroke-width="4"/><rect x="1830.0" y="907.0" width="16" height="16" fill="#c4c4ea" stroke="#00008b" stroke-width="4"/><rect x="1738.0" y="999.0" width="16" height="16" fill="#c4c4ea" stroke="#00008b" stroke-width="4"/><rect x="1232.0" y="907.0" width="16" height="16" fill="#c4c4ea" stroke="#00008b" stroke-width="4"/><rect x="1094.0" y="1413.0" width="16" height="16" fill="#c4c4ea" stroke="#00008b" stroke-width="4"/><rect x="1600.0" y="1275.0" width="16" height="16" fill="#c4c4ea" stroke="#00008b" stroke-width="4"/><circle cx="1470.0" cy="1053.0" r="10.600" fill="#ff0adc" stroke="#000" stroke-width="4"/></svg>
<div style="left:630px;top:1717px;width:1680px;height:302px;background:#ebebeb;border-top:2px solid #c9c9c9"></div>
<div style="left:1432px;top:1724.5px;width:76px;height:3.5px;background:#6e6e6e;border-radius:2px"></div>
<div style="left:630px;top:1717px;width:1680px;height:302px;overflow:hidden;-webkit-mask-image:linear-gradient(90deg,#000 0,#000 1545px,transparent 1650px);mask-image:linear-gradient(90deg,#000 0,#000 1545px,transparent 1650px)"><div style="left:67.7px;top:72.2px;width:1613.3px;height:39.6px;background:#fff"></div><div style="left:67.7px;top:192.2px;width:1111.0px;height:39.6px;background:#fff"></div><span class="t" style="left:31.3px;top:39px;font-size:32.9px;line-height:33px;font-family:'Liberation Mono',monospace;color:#444;letter-spacing:-0.003px">&lt;svg viewBox="0 0 19 19" stroke="currentColor" stroke-linecap="round" stroke-linejoin="round" stroke-width="1"&gt;</span><span class="t" style="left:31.3px;top:79px;font-size:32.9px;line-height:33px;font-family:'Liberation Mono',monospace;color:#444;letter-spacing:-0.003px">  <span style="color:#5c4a42">&lt;</span><span style="color:#3c7d5a">polygon</span> <span style="color:#d4560e">fill</span><span style="color:#5c4a42">="</span><span style="color:#777412">#ede19b</span><span style="color:#5c4a42">"</span> <span style="color:#d4560e">points</span><span style="color:#5c4a42">="</span><span style="color:#777412">15.5 8.5 15.5 8.5 10.5 3.5 10.5 3.5 4.5 6.5 1.5 17.5 12.5 14.5</span><span style="color:#5c4a42">" /&gt;</span></span><span class="t" style="left:31.3px;top:119px;font-size:32.9px;line-height:33px;font-family:'Liberation Mono',monospace;color:#444;letter-spacing:-0.003px">  &lt;circle cx="9.5" cy="9.5" r="1.5" /&gt;</span><span class="t" style="left:31.3px;top:159px;font-size:32.9px;line-height:33px;font-family:'Liberation Mono',monospace;color:#444;letter-spacing:-0.003px">  &lt;line fill="none" x1="1.5" x2="8.25" y1="17.5" y2="10.75" /&gt;</span><span class="t" style="left:31.3px;top:199px;font-size:32.9px;line-height:33px;font-family:'Liberation Mono',monospace;color:#444;letter-spacing:-0.003px">  <span style="color:#5c4a42">&lt;</span><span style="color:#3c7d5a">polygon</span> <span style="color:#d4560e">points</span><span style="color:#5c4a42">="</span><span style="color:#777412">10.5 3.5 12.5 1.5 17.5 6.5 15.5 8.5</span><span style="color:#5c4a42">" /&gt;</span></span><span class="t" style="left:31.3px;top:239px;font-size:32.9px;line-height:33px;font-family:'Liberation Mono',monospace;color:#444;letter-spacing:-0.003px">&lt;/svg&gt;</span></div>
<svg style="left:2350px;top:193px;" width="79" height="58" viewBox="0 0 79 58"><path class="ic" d="M22.6 23.100 V35.5 H34.2 M22.6 35.5 L33.5 24.600 A11.6 11.6 0 1 1 50 39.2" stroke-width="2.4" stroke-linejoin="miter" stroke-linecap="butt"/></svg>
<svg style="left:2429px;top:193px;" width="117" height="58" viewBox="0 0 117 58"><g class="ic" stroke-width="2.400" stroke-linecap="butt" stroke-linejoin="miter"><path d="M43.900 32.900 A16.300 16.300 0 1 1 48.500 40.900"/><path d="M39.900 28.300 L43.500 34.200 L49.500 29.600"/><path d="M55.300 25.700 L62.300 31.400 L70.800 25.200"/></g></svg>
<svg style="left:2546px;top:193px;" width="78" height="58" viewBox="0 0 78 58"><path d="M55.100 23.100 V35.5 H43.5 M55.100 35.5 L44.2 24.600 A11.6 11.6 0 1 0 27.700 39.2" fill="none" stroke="#7a7a7a" stroke-width="2.400"/></svg>
<div class="blu" style="left:2645px;top:193px;width:116.5px;height:58px;"></div>
<svg style="left:2645px;top:193px;" width="117" height="58" viewBox="0 0 117 58"><g class="ic" stroke-width="2.400"><path d="M39.2 28.800 C46 20.500 52 18 58.100 18 C64 18 70 20.500 76.900 28.800 C70 37.500 64 39.900 58.100 39.900 C52 39.900 46 37.500 39.2 28.800 Z"/><circle cx="58.100" cy="27.800" r="7.700"/></g></svg>
<svg style="left:2879px;top:217px;" width="24" height="14" viewBox="0 0 24 14"><path d="M1 1.700 L11.800 12.600 L22.400 1.700" stroke="#2a5bd7" stroke-width="3.400" fill="none" stroke-linecap="round" stroke-linejoin="round"/></svg>
<div style="left:2310px;top:348.9px;width:640px;height:712px;background:#ebebeb;border-top:1.8px solid #c9c9c9;border-left:2px solid #c8c8c8;border-radius:14px 0 0 0"></div>
<svg style="left:2335.5px;top:290.5px;" width="303.7" height="62.8" viewBox="0 0 303.7 62.8"><defs><linearGradient id="hg" x1="0" y1="0" x2="0" y2="1"><stop offset="0" stop-color="#ebe4d6"/><stop offset=".5" stop-color="#ebe8e2"/><stop offset="1" stop-color="#eaeaea"/></linearGradient><linearGradient id="ht" gradientUnits="userSpaceOnUse" x1="15.0" y1="0" x2="288.7" y2="0"><stop offset="0" stop-color="#cbcbcb"/><stop offset=".1" stop-color="#b58a2c"/><stop offset=".75" stop-color="#b58a2c"/><stop offset="1" stop-color="#cbcbcb"/></linearGradient></defs><path d="M1.0 59.3 C8.7 59.3 15.0 53.0 15.0 45.3 V14.5 C15.0 7.4 20.9 1.5 28.0 1.5 H275.7 C282.8 1.5 288.7 7.4 288.7 14.5 V45.3 C288.7 53.0 295.0 59.3 302.7 59.3 V61.8 H1.0 Z" fill="url(#hg)"/><path d="M-2.0 59.3 H1.0 C8.7 59.3 15.0 53.0 15.0 45.3 V14.5 C15.0 7.4 20.9 1.5 28.0 1.5 M275.7 1.5 C282.8 1.5 288.7 7.4 288.7 14.5 V45.3 C288.7 53.0 295.0 59.3 302.7 59.3 H305.7" fill="none" stroke="#c9c9c9" stroke-width="1.8"/><path d="M24.0 1.5 H279.7" stroke="url(#ht)" stroke-width="1.8" fill="none"/></svg>
<span class="t" style="left:2400.6px;top:306px;font-size:28.21px;line-height:29px;color:#9f6b00;letter-spacing:0.37px;">Glyph History</span>
<span class="t" style="left:2667.2px;top:306px;font-size:27.17px;line-height:28px;color:#404040;letter-spacing:-0.28px;">Glyph Branches</span>
<div style="left:0;top:0;width:2940px;height:2019px;-webkit-mask-image:linear-gradient(rgba(0,0,0,.3) 362px,rgba(0,0,0,.72) 412px);mask-image:linear-gradient(rgba(0,0,0,.3) 362px,rgba(0,0,0,.72) 412px)"><span class="t" style="left:2351.0px;top:375px;font-size:28.74px;line-height:29px;color:#6f6f6f;letter-spacing:-0.73px;">39.</span><span class="t" style="left:2397.6px;top:375px;font-size:28.74px;line-height:29px;color:#404040;letter-spacing:0.09px;">Add path segment</span><div style="left:2814.2px;top:369.2px;width:37.6px;height:37.6px;border-radius:50%;background:#90dacd"></div><span class="t" style="left:2823.6px;top:374px;font-size:28.21px;line-height:29px;color:#0b5e50;font-weight:700;-webkit-text-stroke:0;">S</span><svg style="left:2878px;top:375px;" width="26" height="26" viewBox="0 0 26 26"><path d="M13 1.500 L24.500 13 L13 24.500 L1.500 13 Z" fill="#d9d9d9" stroke="#8a8a8a" stroke-width="2" stroke-linejoin="miter"/></svg></div>
<span class="t" style="left:2351.0px;top:433px;font-size:28.74px;line-height:29px;color:#6f6f6f;letter-spacing:-0.73px;">40.</span><span class="t" style="left:2397.6px;top:433px;font-size:28.74px;line-height:29px;color:#404040;letter-spacing:0.09px;">Add path segment</span><div style="left:2814.2px;top:427.2px;width:37.6px;height:37.6px;border-radius:50%;background:#90dacd"></div><span class="t" style="left:2823.6px;top:432px;font-size:28.21px;line-height:29px;color:#0b5e50;font-weight:700;-webkit-text-stroke:0;">S</span><svg style="left:2878px;top:433px;" width="26" height="26" viewBox="0 0 26 26"><path d="M13 1.500 L24.500 13 L13 24.500 L1.500 13 Z" fill="#d9d9d9" stroke="#8a8a8a" stroke-width="2" stroke-linejoin="miter"/></svg>
<span class="t" style="left:2351.0px;top:491px;font-size:28.74px;line-height:29px;color:#6f6f6f;letter-spacing:-0.73px;">41.</span><span class="t" style="left:2397.6px;top:491px;font-size:28.74px;line-height:29px;color:#404040;letter-spacing:0.14px;">Connect path</span><div style="left:2814.2px;top:485.2px;width:37.6px;height:37.6px;border-radius:50%;background:#90dacd"></div><span class="t" style="left:2823.6px;top:490px;font-size:28.21px;line-height:29px;color:#0b5e50;font-weight:700;-webkit-text-stroke:0;">S</span><svg style="left:2878px;top:491px;" width="26" height="26" viewBox="0 0 26 26"><path d="M13 1.500 L24.500 13 L13 24.500 L1.500 13 Z" fill="#d9d9d9" stroke="#8a8a8a" stroke-width="2" stroke-linejoin="miter"/></svg>
<span class="t" style="left:2351.0px;top:549px;font-size:28.74px;line-height:29px;color:#6f6f6f;letter-spacing:-0.73px;">42.</span><span class="t" style="left:2397.6px;top:549px;font-size:28.74px;line-height:29px;color:#404040;letter-spacing:-0.41px;">Remove 1 shape</span><div style="left:2814.2px;top:543.2px;width:37.6px;height:37.6px;border-radius:50%;background:#f4b9a2"></div><span class="t" style="left:2824.4px;top:548px;font-size:28.21px;line-height:29px;color:#8c0f0f;font-weight:700;-webkit-text-stroke:0;">T</span><svg style="left:2878px;top:549px;" width="26" height="26" viewBox="0 0 26 26"><path d="M13 1.500 L24.500 13 L13 24.500 L1.500 13 Z" fill="#d9d9d9" stroke="#8a8a8a" stroke-width="2" stroke-linejoin="miter"/></svg>
<span class="t" style="left:2351.0px;top:607px;font-size:28.74px;line-height:29px;color:#6f6f6f;letter-spacing:-0.73px;">43.</span><span class="t" style="left:2397.6px;top:607px;font-size:28.74px;line-height:29px;color:#df3540;letter-spacing:0.19px;">Move 2 corner points</span><div style="left:2814.2px;top:601.2px;width:37.6px;height:37.6px;border-radius:50%;background:#f4b9a2"></div><span class="t" style="left:2824.4px;top:606px;font-size:28.21px;line-height:29px;color:#8c0f0f;font-weight:700;-webkit-text-stroke:0;">T</span><svg style="left:2878px;top:607px;" width="26" height="26" viewBox="0 0 26 26"><path d="M13 1.500 L24.500 13 L13 24.500 L1.500 13 Z" fill="#cfcfcf" stroke="#3a3a3a" stroke-width="2"/><path d="M0.500 0.500 L26 23.500" stroke="#e02020" stroke-width="1.800"/></svg>
<span class="t" style="left:2351.0px;top:665px;font-size:28.74px;line-height:29px;color:#6f6f6f;letter-spacing:-0.73px;">44.</span><span class="t" style="left:2397.6px;top:665px;font-size:28.74px;line-height:29px;color:#404040;letter-spacing:-0.06px;">Add 1 node</span><div style="left:2814.2px;top:659.2px;width:37.6px;height:37.6px;border-radius:50%;background:#90dacd"></div><span class="t" style="left:2823.6px;top:664px;font-size:28.21px;line-height:29px;color:#0b5e50;font-weight:700;-webkit-text-stroke:0;">S</span><svg style="left:2878px;top:665px;" width="26" height="26" viewBox="0 0 26 26"><path d="M13 1.500 L24.500 13 L13 24.500 L1.500 13 Z" fill="#d9d9d9" stroke="#8a8a8a" stroke-width="2" stroke-linejoin="miter"/></svg>
<span class="t" style="left:2351.0px;top:723px;font-size:28.74px;line-height:29px;color:#6f6f6f;letter-spacing:-0.73px;">45.</span><span class="t" style="left:2397.6px;top:723px;font-size:28.74px;line-height:29px;color:#404040;letter-spacing:-0.06px;">Add 1 node</span><div style="left:2814.2px;top:717.2px;width:37.6px;height:37.6px;border-radius:50%;background:#f4b9a2"></div><span class="t" style="left:2824.4px;top:722px;font-size:28.21px;line-height:29px;color:#8c0f0f;font-weight:700;-webkit-text-stroke:0;">T</span><svg style="left:2878px;top:723px;" width="26" height="26" viewBox="0 0 26 26"><path d="M13 1.500 L24.500 13 L13 24.500 L1.500 13 Z" fill="#d9d9d9" stroke="#8a8a8a" stroke-width="2" stroke-linejoin="miter"/></svg>
<span class="t" style="left:2351.0px;top:781px;font-size:28.74px;line-height:29px;color:#6f6f6f;letter-spacing:-0.73px;">46.</span><span class="t" style="left:2397.6px;top:781px;font-size:28.74px;line-height:29px;color:#404040;letter-spacing:-0.41px;">Remove 1 shape</span><div style="left:2814.2px;top:775.2px;width:37.6px;height:37.6px;border-radius:50%;background:#f4b9a2"></div><span class="t" style="left:2824.4px;top:780px;font-size:28.21px;line-height:29px;color:#8c0f0f;font-weight:700;-webkit-text-stroke:0;">T</span><svg style="left:2878px;top:781px;" width="26" height="26" viewBox="0 0 26 26"><path d="M13 1.500 L24.500 13 L13 24.500 L1.500 13 Z" fill="#d9d9d9" stroke="#8a8a8a" stroke-width="2" stroke-linejoin="miter"/></svg>
<span class="t" style="left:2351.0px;top:839px;font-size:28.74px;line-height:29px;color:#6f6f6f;letter-spacing:-0.73px;">47.</span><span class="t" style="left:2397.6px;top:839px;font-size:28.74px;line-height:29px;color:#404040;letter-spacing:-0.41px;">Remove 1 shape</span><div style="left:2814.2px;top:833.2px;width:37.6px;height:37.6px;border-radius:50%;background:#f4b9a2"></div><span class="t" style="left:2824.4px;top:838px;font-size:28.21px;line-height:29px;color:#8c0f0f;font-weight:700;-webkit-text-stroke:0;">T</span><svg style="left:2878px;top:839px;" width="26" height="26" viewBox="0 0 26 26"><path d="M13 1.500 L24.500 13 L13 24.500 L1.500 13 Z" fill="#d9d9d9" stroke="#8a8a8a" stroke-width="2" stroke-linejoin="miter"/></svg>
<div style="left:2330px;top:881px;width:540px;height:58px;background:linear-gradient(90deg,rgba(214,170,80,.17) 0,rgba(214,170,80,.11) 45%,rgba(214,170,80,0) 96%)"></div>
<div style="left:2330px;top:881px;width:6px;height:58px;background:linear-gradient(#9a6700 0,#a06c00 60%,#c9a04c 100%);border-radius:3px"></div>
<span class="t" style="left:2351.0px;top:897px;font-size:28.74px;line-height:29px;color:#6f6f6f;letter-spacing:-0.73px;">48.</span><span class="t" style="left:2397.6px;top:897px;font-size:28.74px;line-height:29px;color:#9f6b00;letter-spacing:-0.05px;">Change a fill to</span><div style="left:2598.3px;top:891px;width:37.6px;height:37.6px;background:#fff4d6;border:2.2px solid #1c1c1c;border-radius:7px"></div><span class="t" style="left:2646.3px;top:897px;font-size:28.74px;line-height:29px;color:#9f6b00;letter-spacing:1.79px;">#fff4d6</span><div style="left:2814.2px;top:891.2px;width:37.6px;height:37.6px;border-radius:50%;background:#90dacd"></div><span class="t" style="left:2823.6px;top:896px;font-size:28.21px;line-height:29px;color:#0b5e50;font-weight:700;-webkit-text-stroke:0;">S</span><svg style="left:2878px;top:897px;" width="26" height="26" viewBox="0 0 26 26"><path d="M13 1.500 L24.500 13 L13 24.500 L1.500 13 Z" fill="#d9d9d9" stroke="#8a8a8a" stroke-width="2" stroke-linejoin="miter"/></svg>
<div style="left:2310px;top:1047.9px;width:640px;height:980px;background:#ebebeb;border-top:1.8px solid #c9c9c9;border-left:2px solid #c8c8c8;border-radius:14px 0 0 0"></div>
<svg style="left:2610.3px;top:989.5px;" width="304.4" height="62.8" viewBox="0 0 304.4 62.8"><defs><linearGradient id="pg" x1="0" y1="0" x2="0" y2="1"><stop offset="0" stop-color="#ebe4d6"/><stop offset=".5" stop-color="#ebe8e2"/><stop offset="1" stop-color="#eaeaea"/></linearGradient><linearGradient id="pt" gradientUnits="userSpaceOnUse" x1="15.0" y1="0" x2="289.4" y2="0"><stop offset="0" stop-color="#cbcbcb"/><stop offset=".1" stop-color="#b58a2c"/><stop offset=".75" stop-color="#b58a2c"/><stop offset="1" stop-color="#cbcbcb"/></linearGradient></defs><path d="M1.0 59.3 C8.7 59.3 15.0 53.0 15.0 45.3 V14.5 C15.0 7.4 20.9 1.5 28.0 1.5 H276.4 C283.5 1.5 289.4 7.4 289.4 14.5 V45.3 C289.4 53.0 295.7 59.3 303.4 59.3 V61.8 H1.0 Z" fill="url(#pg)"/><path d="M-2.0 59.3 H1.0 C8.7 59.3 15.0 53.0 15.0 45.3 V14.5 C15.0 7.4 20.9 1.5 28.0 1.5 M276.4 1.5 C283.5 1.5 289.4 7.4 289.4 14.5 V45.3 C289.4 53.0 295.7 59.3 303.4 59.3 H306.4" fill="none" stroke="#c9c9c9" stroke-width="1.8"/><path d="M24.0 1.5 H280.4" stroke="url(#pt)" stroke-width="1.8" fill="none"/></svg>
<span class="t" style="left:2401.5px;top:1005px;font-size:27.17px;line-height:28px;color:#404040;letter-spacing:-0.05px;">Editor Options</span>
<span class="t" style="left:2712.7px;top:1005px;font-size:28.21px;line-height:29px;color:#9f6b00;letter-spacing:-0.12px;">Preview</span>
<span class="t" style="left:2350.2px;top:1106px;font-size:29px;line-height:29px;color:#666;font-family:'Liberation Mono', monospace;letter-spacing:-3.06px;">W 19 × H 19</span>
<span class="t" style="left:2734.8px;top:1106px;font-size:29px;line-height:29px;color:#666;font-family:'Liberation Mono', monospace;letter-spacing:-1.24px;">~453 bytes</span>
<span class="t" style="left:2350.5px;top:1191px;font-size:29.26px;line-height:30px;color:#404040;letter-spacing:-0.69px;">Pixel Preview</span>
<div style="left:2816px;top:1182px;width:78px;height:46px;border-radius:23px;background:#c9c9c9"><div style="left:4px;top:4px;width:38px;height:38px;border-radius:50%;background:#fff;box-shadow:0 1px 2px rgba(0,0,0,.2)"></div></div>
<div class="btn" style="left:2350px;top:1274px;width:550px;height:58px;background:#f6f7f7"></div>
<span class="t" style="left:2533.8px;top:1290px;font-size:29.26px;line-height:30px;color:#404040;letter-spacing:-0.56px;">Add View Size</span>
<span class="t" style="left:2350.5px;top:1387px;font-size:29.26px;line-height:30px;color:#404040;letter-spacing:-0.44px;">Add Padding</span>
<div style="left:2816px;top:1378px;width:78px;height:46px;border-radius:23px;background:#676bd0"><div style="left:36px;top:4px;width:38px;height:38px;border-radius:50%;background:#fff;box-shadow:0 1px 2px rgba(0,0,0,.2)"></div></div>
<span class="t" style="left:2350.5px;top:1485px;font-size:29.26px;line-height:30px;color:#404040;letter-spacing:-0.26px;">Circular Background</span>
<div style="left:2816px;top:1476px;width:78px;height:46px;border-radius:23px;background:#676bd0"><div style="left:36px;top:4px;width:38px;height:38px;border-radius:50%;background:#fff;box-shadow:0 1px 2px rgba(0,0,0,.2)"></div></div>
<div style="left:2350px;top:1568px;width:158px;height:158px;border-radius:50%;background:#fff"></div><svg style="left:2372.0px;top:1590.0px" width="114" height="114" viewBox="0 0 19 19" stroke="#6c574d" stroke-linecap="round" stroke-linejoin="round" stroke-width="1"><polygon fill="#ede19b" points="15.5 8.5 10.5 3.5 4.5 6.5 1.5 17.5 12.5 14.5"/><circle cx="9.5" cy="9.5" r="1.5" fill="#fff4d6"/><line x1="1.500" x2="8.25" y1="17.5" y2="10.75"/><polygon fill="#fff4d6" points="10.5 3.5 12.5 1.5 17.5 6.5 15.5 8.5"/></svg>
<div style="left:2350px;top:1746px;width:108px;height:108px;border-radius:50%;background:#fff"></div><svg style="left:2366.0px;top:1762.0px" width="76" height="76" viewBox="0 0 19 19" stroke="#6c574d" stroke-linecap="round" stroke-linejoin="round" stroke-width="1"><polygon fill="#ede19b" points="15.5 8.5 10.5 3.5 4.5 6.5 1.5 17.5 12.5 14.5"/><circle cx="9.5" cy="9.5" r="1.5" fill="#fff4d6"/><line x1="1.500" x2="8.25" y1="17.5" y2="10.75"/><polygon fill="#fff4d6" points="10.5 3.5 12.5 1.5 17.5 6.5 15.5 8.5"/></svg>
<div style="left:2350px;top:1874px;width:54px;height:54px;border-radius:50%;background:#fff"></div><svg style="left:2358.0px;top:1882.0px" width="38" height="38" viewBox="0 0 19 19" stroke="#6c574d" stroke-linecap="round" stroke-linejoin="round" stroke-width="1"><polygon fill="#ede19b" points="15.5 8.5 10.5 3.5 4.5 6.5 1.5 17.5 12.5 14.5"/><circle cx="9.5" cy="9.5" r="1.5" fill="#fff4d6"/><line x1="1.500" x2="8.25" y1="17.5" y2="10.75"/><polygon fill="#fff4d6" points="10.5 3.5 12.5 1.5 17.5 6.5 15.5 8.5"/></svg>
<span class="t" style="left:2796.6px;top:1582px;font-size:31.35px;line-height:32px;color:#404040;letter-spacing:-0.47px;">57</span>
<svg style="left:2852px;top:1578px;" width="38" height="38" viewBox="0 0 38 38"><circle cx="19" cy="19" r="17.500" fill="none" stroke="#dc1f1f" stroke-width="2"/><path d="M12.500 19 H25.500" stroke="#dc1f1f" stroke-width="2.2"/></svg>
<span class="t" style="left:2796.6px;top:1759px;font-size:31.35px;line-height:32px;color:#404040;letter-spacing:-0.47px;">38</span>
<svg style="left:2852px;top:1755.8px;" width="38" height="38" viewBox="0 0 38 38"><circle cx="19" cy="19" r="17.500" fill="none" stroke="#dc1f1f" stroke-width="2"/><path d="M12.500 19 H25.500" stroke="#dc1f1f" stroke-width="2.2"/></svg>
<span class="t" style="left:2796.6px;top:1888px;font-size:31.35px;line-height:32px;color:#404040;letter-spacing:-0.47px;">19</span>
<svg style="left:2852px;top:1883.8px;" width="38" height="38" viewBox="0 0 38 38"><circle cx="19" cy="19" r="17.500" fill="none" stroke="#dc1f1f" stroke-width="2"/><path d="M12.500 19 H25.500" stroke="#dc1f1f" stroke-width="2.2"/></svg>
</body></html>
